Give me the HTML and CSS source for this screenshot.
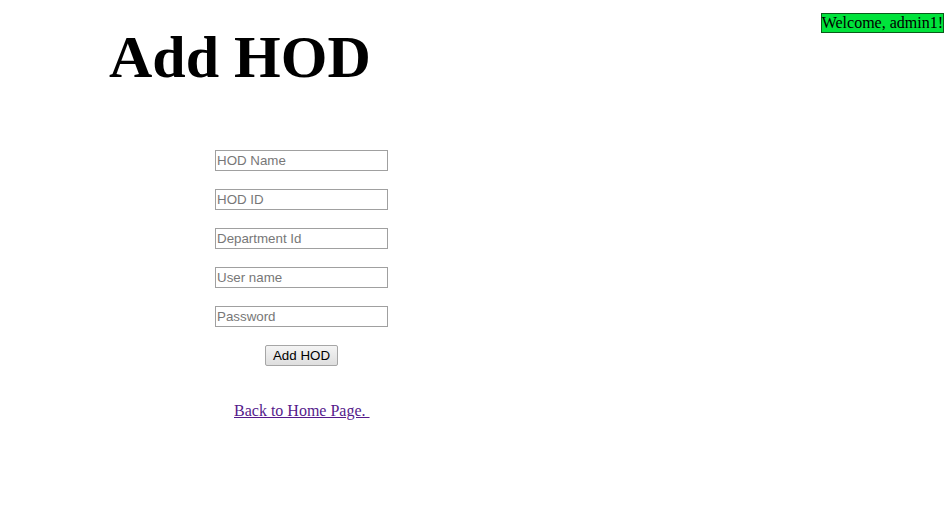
FILE: index.html
```html
<!DOCTYPE html>
<html>
<head>
<meta charset="utf-8">
<title>Add HOD</title>
<link rel="stylesheet" href="styles.css">
</head>
<body>
<div class="welcome">Welcome, admin1!</div>
<h1 class="title">Add HOD</h1>
<form class="form">
  <input class="field" type="text" placeholder="HOD Name">
  <input class="field" type="text" placeholder="HOD ID">
  <input class="field" type="text" placeholder="Department Id">
  <input class="field" type="text" placeholder="User name">
  <input class="field" type="password" placeholder="Password">
  <button class="btn" type="button">Add HOD</button>
</form>
<div class="back"><a class="link" href="#">Back to Home Page.&nbsp;</a></div>
</body>
</html>
```
FILE: styles.css
```css
body {
  margin: 0;
  padding: 8px;
  font-family: "Liberation Serif", serif;
  font-size: 16px;
  color: #000;
  background: #fff;
}
.welcome {
  float: right;
  margin-top: 5px;
  background: #00e33b;
  border: 1px solid #0a5a1a;
  line-height: 18px;
  padding: 0;
}
.title {
  margin: 15px 0 0 101px;
  font-size: 60px;
  font-weight: bold;
  line-height: 69px;
}
.form {
  margin: 58px 0 0 207px;
  width: 173px;
  display: flex;
  flex-direction: column;
  align-items: center;
  gap: 18px;
}
.field {
  box-sizing: border-box;
  width: 173px;
  height: 21px;
  margin: 0;
  padding: 1px 1px;
  border: 1px solid #a0a0a0;
  border-radius: 0;
  font-family: "Liberation Sans", sans-serif;
  font-size: 13.33px;
  color: #000;
  outline: none;
}
.field::placeholder {
  color: #777;
}
.btn {
  box-sizing: border-box;
  height: 21px;
  width: 73px;
  padding: 0;
  margin: 0;
  font-family: "Liberation Sans", sans-serif;
  font-size: 13.33px;
  color: #000;
  background: linear-gradient(#f4f4f4, #dedede);
  border: 1px solid #a6a6a6;
  border-radius: 2px;
}
.back {
  margin: 36px 0 0 226px;
  line-height: 18px;
}
.link {
  color: #551a8b;
}
```
